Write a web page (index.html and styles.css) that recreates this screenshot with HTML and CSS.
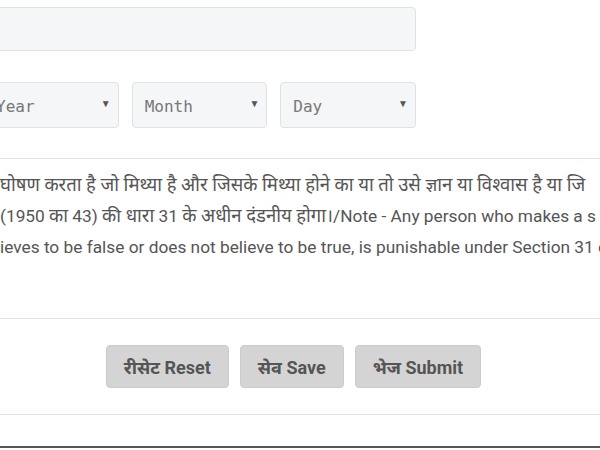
FILE: index.html
```html
<!DOCTYPE html>
<html lang="hi">
<head>
    <meta charset="UTF-8">
    <meta name="viewport" content="width=device-width, initial-scale=1.0">
    <title>घोषणा / Declaration</title>
    <link rel="stylesheet" href="styles.css">
</head>
<body>
    <div class="page">
        <form class="declaration-form">
            <!-- Name field -->
            <div class="field-row">
                <input type="text" class="text-input" name="name">
            </div>

            <!-- Date of birth -->
            <div class="date-row">
                <div class="select-box">
                    <select name="year"><option>Year</option></select>
                </div>
                <div class="select-box">
                    <select name="month"><option>Month</option></select>
                </div>
                <div class="select-box">
                    <select name="day"><option>Day</option></select>
                </div>
            </div>

            <hr class="divider">

            <!-- Note -->
            <div class="note">
                <span class="note-line"><span class="deva">घोषण करता है जो मिथ्या है और जिसके मिथ्या होने का या तो उसे ज्ञान या विश्वास है या जि</span></span>
                <span class="note-line">(1950 <span class="deva">का</span> 43) <span class="deva">की धारा</span> 31 <span class="deva">के अधीन दंडनीय होगा।</span>/Note - Any person who makes a s</span>
                <span class="note-line">ieves to be false or does not believe to be true, is punishable under Section 31 o</span>
            </div>

            <hr class="divider">

            <div class="actions">
                <button type="reset" class="btn">रीसेट Reset</button>
                <button type="button" class="btn">सेव Save</button>
                <button type="submit" class="btn">भेज Submit</button>
            </div>

            <hr class="divider">
        </form>
        <div class="footer-line"></div>
    </div>
</body>
</html>
```

FILE: styles.css
```css
body {
    margin: 0;
    font-family: Roboto, "Noto Sans", sans-serif;
    background: #fff;
    overflow: hidden;
}
.page {
    width: 640px;
    margin-left: -17px;
}
.declaration-form {
    display: flex;
    flex-direction: column;
}
.field-row {
    padding-top: 7px;
}
.text-input {
    display: block;
    width: 433px;
    height: 44px;
    box-sizing: border-box;
    background: #f4f6f7;
    border: 1px solid #dde2e4;
    border-radius: 4px;
}
.date-row {
    display: flex;
    gap: 13px;
    width: 433px;
    margin-top: 31px;
}
.select-box {
    position: relative;
    flex: 1;
}
.select-box::after {
    content: "\25BC";
    position: absolute;
    right: 8px;
    top: 16px;
    font-size: 10px;
    color: #555;
    pointer-events: none;
}
.select-box select {
    appearance: none;
    -webkit-appearance: none;
    width: 100%;
    height: 46px;
    padding: 2px 12px 0;
    background: #f4f6f7;
    border: 1px solid #dde2e4;
    border-radius: 4px;
    font-family: "DejaVu Sans Mono", monospace;
    font-size: 16px;
    color: #777;
}
.divider {
    margin: 0;
    border: none;
    border-top: 1px solid #e3e3e3;
}
.date-row + .divider {
    margin-top: 30px;
}
.note {
    display: flex;
    flex-direction: column;
    padding: 11px 0 0 17px;
    height: 148px;
    overflow: hidden;
    font-size: 17.3px;
    line-height: 31px;
    color: #555;
}
.note-line {
    white-space: nowrap;
}
.deva {
    font-size: 18.5px;
}
.actions {
    display: flex;
    justify-content: center;
    gap: 11px;
    width: 621px;
    padding: 26px 0 26px;
}
.btn {
    height: 43px;
    padding: 0 17px;
    background: #d4d4d4;
    border: 1px solid #cbcbcb;
    border-radius: 4px;
    font-family: Roboto, "Noto Sans", sans-serif;
    font-size: 18px;
    font-weight: bold;
    color: #555;
}
.footer-line {
    margin-top: 31px;
    border-top: 2px solid #555;
}
```
